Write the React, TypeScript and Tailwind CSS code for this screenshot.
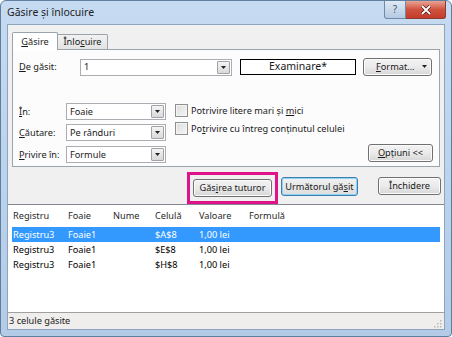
import type { ReactNode } from "react";

const rows = [
  { book: "Registru3", sheet: "Foaie1", cell: "$A$8", value: "1,00 lei", sel: true },
  { book: "Registru3", sheet: "Foaie1", cell: "$E$8", value: "1,00 lei", sel: false },
  { book: "Registru3", sheet: "Foaie1", cell: "$H$8", value: "1,00 lei", sel: false },
];

export default function App() {
  return (
    <div
      className="w-[452px] h-[337px] flex flex-col rounded-t-[6px] rounded-b-[4px] border border-[#5f7f9f] bg-gradient-to-b from-[#c6dbf1] via-[#bcd3ec] to-[#b3cbe6] text-[9.2px] text-[#1a1a1a] overflow-hidden"
      style={{ fontFamily: '"Noto Sans", "Open Sans", sans-serif' }}
    >
      {/* Title bar */}
      <div className="h-[23px] flex items-start justify-between shrink-0">
        <span className="pl-[6px] pt-[6px] text-[10.5px] leading-none text-[#1e1e1e]">Găsire și înlocuire</span>
        <div className="flex mr-[5px]">
          <div className="w-[22px] h-[18px] flex items-center justify-center rounded-bl-[3px] border border-t-0 border-[#6d8aaa] bg-gradient-to-b from-[#dfe9f5] to-[#b5c9e0] text-[10px] text-[#3f5877]">?</div>
          <div className="w-[40px] h-[18px] flex items-center justify-center rounded-br-[3px] border border-t-0 border-l-0 border-[#8a3b32] bg-gradient-to-b from-[#e8a394] via-[#d0513f] to-[#c53a2a]">
            <svg width="12" height="10" viewBox="0 0 12 10">
              <path d="M2 1 L10 9 M10 1 L2 9" stroke="#4a1a14" strokeWidth="3.2" />
              <path d="M2 1 L10 9 M10 1 L2 9" stroke="#fff" strokeWidth="1.8" />
            </svg>
          </div>
        </div>
      </div>

      {/* Client area */}
      <div className="mx-[6px] mb-[6px] h-[307px] flex flex-col bg-[#f0f0f0] border border-[#8da4bf]">
        {/* Tabs */}
        <div className="flex items-end h-[24px] pl-[4px] pt-[6px]">
          <div className="w-[46px] h-[18px] bg-white border border-b-0 border-[#9aa4ad] rounded-t-[2px] flex items-center justify-center relative -mb-px z-10 pt-[1px]">
            <span><u>G</u>ăsire</span>
          </div>
          <div className="w-[50px] h-[15px] bg-gradient-to-b from-[#f2f2f2] to-[#e3e3e3] border border-b-0 border-l-0 border-[#9aa4ad] rounded-tr-[2px] flex items-center justify-center">
            <span>Înlo<u>c</u>uire</span>
          </div>
        </div>

        {/* Tab panel */}
        <div className="mx-[4px] h-[118px] bg-[#fcfcfc] border border-[#9aa4ad] flex flex-col px-[6px] pt-[9px]">
          <div className="flex items-center h-[16px]">
            <span className="w-[61px]"><u>D</u>e găsit:</span>
            <Combo w="w-[152px]" text="1" />
            <div className="ml-[8px] w-[116px] h-[16px] border border-black bg-white flex items-center justify-center text-[10.5px]">Examinare*</div>
            <Button className="ml-[7px] w-[69px]">
              <span className="flex items-center w-full justify-between pl-[12px] pr-[4px]">
                <span><u>F</u>ormat...</span>
                <Arrow />
              </span>
            </Button>
          </div>

          <div className="flex mt-[28px]">
            <div className="flex flex-col">
              <div className="flex items-center h-[17px]">
                <span className="w-[47px]"><u>Î</u>n:</span>
                <Combo w="w-[100px]" text="Foaie" />
              </div>
              <div className="flex items-center h-[17px] mt-[4px]">
                <span className="w-[47px]"><u>C</u>ăutare:</span>
                <Combo w="w-[100px]" text="Pe rânduri" />
              </div>
              <div className="flex items-center h-[17px] mt-[5px]">
                <span className="w-[47px]"><u>P</u>rivire în:</span>
                <Combo w="w-[100px]" text="Formule" />
              </div>
            </div>
            <div className="flex flex-col ml-[9px] pt-[1px]">
              <Check>Potrivire litere mari și <u>m</u>ici</Check>
              <div className="mt-[5px]">
                <Check>Po<u>t</u>rivire cu întreg conținutul celulei</Check>
              </div>
            </div>
            <div className="ml-auto flex items-end">
              <Button className="w-[65px] h-[17px] mb-[1px]">
                <span><u>O</u>pțiuni &lt;&lt;</span>
              </Button>
            </div>
          </div>
        </div>

        {/* Action buttons */}
        <div className="flex items-start h-[37px] pt-[5px]">
          <div className="ml-[179px] w-[91px] h-[32px] border-[3px] border-[#e0128a] flex items-center justify-center">
            <Button className="w-[79px]">
              <span>Găs<u>i</u>rea tuturor</span>
            </Button>
          </div>
          <div className="ml-[3px] mt-[5px] w-[77px] h-[19px] rounded-[3px] border border-[#3c7fb1] shadow-[inset_0_0_0_1px_#8ed3f5] bg-gradient-to-b from-[#f1f1f1] to-[#dddddd] flex items-center justify-center">
            <span>Următorul gă<u>s</u>it</span>
          </div>
          <Button className="ml-[20px] mt-[5px] w-[63px]">
            <span>Închidere</span>
          </Button>
        </div>

        {/* Results list */}
        <div className="flex-1 bg-white border-t border-[#828790] flex flex-col">
          <div className="flex items-center h-[21px] pl-[5px] text-[#2a2a2a]">
            <span className="w-[55px]">Registru</span>
            <span className="w-[45px]">Foaie</span>
            <span className="w-[42px]">Nume</span>
            <span className="w-[44px]">Celulă</span>
            <span className="w-[50px]">Valoare</span>
            <span>Formulă</span>
          </div>
          <div className="flex flex-col mx-[4px] mt-[1px]">
            {rows.map((r) => (
              <div
                key={r.cell}
                className={`flex items-center h-[15px] pl-[1px] ${r.sel ? "bg-[#3399ff] text-white" : "text-black"}`}
              >
                <span className="w-[55px]">{r.book}</span>
                <span className="w-[87px]">{r.sheet}</span>
                <span className="w-[44px]">{r.cell}</span>
                <span>{r.value}</span>
              </div>
            ))}
          </div>
        </div>

        {/* Status bar */}
        <div className="h-[17px] shrink-0 border-t border-[#a0a0a0] bg-[#f0eeec] flex items-center justify-between pl-[1px] pr-[2px]">
          <span>3 celule găsite</span>
          <svg width="10" height="10" viewBox="0 0 10 10" className="self-end mb-[1px]">
            {[[8, 2], [8, 5], [5, 5], [8, 8], [5, 8], [2, 8]].map(([x, y]) => (
              <rect key={`${x}-${y}`} x={x} y={y} width="1.5" height="1.5" fill="#b8b8b8" />
            ))}
          </svg>
        </div>
      </div>
    </div>
  );
}

function Arrow() {
  return (
    <svg width="5" height="3" viewBox="0 0 5 3">
      <path d="M0 0 H5 L2.5 3 Z" fill="#222" />
    </svg>
  );
}

function Combo({ w, text }: { w: string; text: string }) {
  return (
    <div className={`${w} h-[17px] border border-[#abadb3] bg-white flex items-stretch`}>
      <span className="flex-1 flex items-center pl-[3px]">{text}</span>
      <div className="w-[13px] m-[1px] border border-[#9ea3aa] rounded-[1px] bg-gradient-to-b from-[#f4f4f4] to-[#d9d9d9] flex items-center justify-center">
        <Arrow />
      </div>
    </div>
  );
}

function Check({ children }: { children: ReactNode }) {
  return (
    <div className="flex items-center h-[13px]">
      <div className="w-[13px] h-[13px] border border-[#8e8f8f] bg-gradient-to-br from-[#dcdcdc] to-[#f6f6f6] shadow-[inset_0_0_0_1px_#f4f4f4]" />
      <span className="ml-[3px]">{children}</span>
    </div>
  );
}

function Button({ className = "", children }: { className?: string; children: ReactNode }) {
  return (
    <div
      className={`h-[18px] rounded-[3px] border border-[#707070] bg-gradient-to-b from-[#f2f2f2] via-[#ebebeb] to-[#d6d6d6] shadow-[inset_0_0_0_1px_#fcfcfc] flex items-center justify-center ${className}`}
    >
      {children}
    </div>
  );
}
